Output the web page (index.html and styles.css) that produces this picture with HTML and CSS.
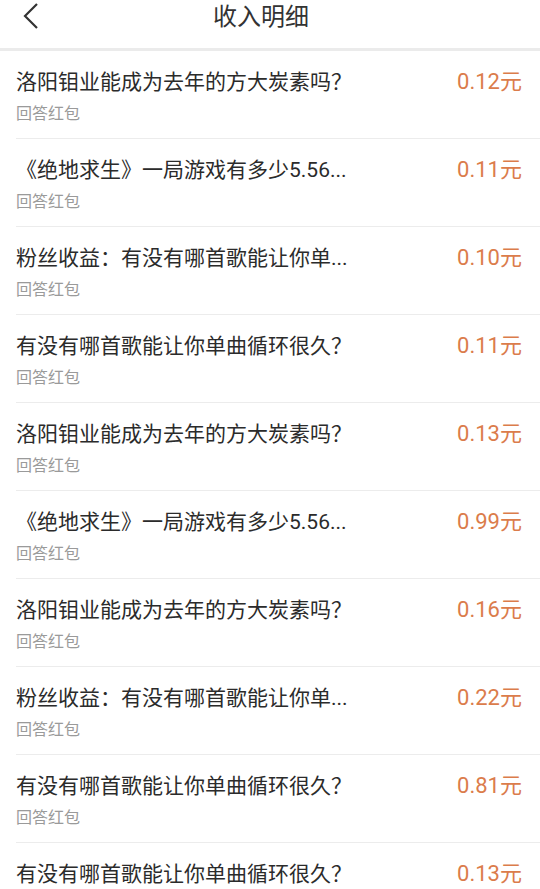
FILE: index.html
```html
<!DOCTYPE html>
<html lang="zh-CN">
<head>
  <meta charset="UTF-8" />
  <meta name="viewport" content="width=device-width, initial-scale=1.0"/>
  <title>收入明细</title>
  <link rel="stylesheet" href="styles.css">
</head>
<body>
  <div class="header">
    <a class="back" href="#">
      <svg width="18" height="28" viewBox="0 0 18 28"><path d="M15 2 L3 14 L15 26" fill="none" stroke="#333" stroke-width="2.2"/></svg>
    </a>
    <h1>收入明细</h1>
  </div>

  <!-- 收入列表 -->
  <ul class="list">
    <li class="item">
      <div class="top"><span class="title">洛阳钼业能成为去年的方大炭素吗？</span><span class="amount">0.12元</span></div>
      <div class="sub">回答红包</div>
    </li>
    <li class="item">
      <div class="top"><span class="title">《绝地求生》一局游戏有多少5.56...</span><span class="amount">0.11元</span></div>
      <div class="sub">回答红包</div>
    </li>
    <li class="item">
      <div class="top"><span class="title">粉丝收益：有没有哪首歌能让你单...</span><span class="amount">0.10元</span></div>
      <div class="sub">回答红包</div>
    </li>
    <li class="item">
      <div class="top"><span class="title">有没有哪首歌能让你单曲循环很久？</span><span class="amount">0.11元</span></div>
      <div class="sub">回答红包</div>
    </li>
    <li class="item">
      <div class="top"><span class="title">洛阳钼业能成为去年的方大炭素吗？</span><span class="amount">0.13元</span></div>
      <div class="sub">回答红包</div>
    </li>
    <li class="item">
      <div class="top"><span class="title">《绝地求生》一局游戏有多少5.56...</span><span class="amount">0.99元</span></div>
      <div class="sub">回答红包</div>
    </li>
    <li class="item">
      <div class="top"><span class="title">洛阳钼业能成为去年的方大炭素吗？</span><span class="amount">0.16元</span></div>
      <div class="sub">回答红包</div>
    </li>
    <li class="item">
      <div class="top"><span class="title">粉丝收益：有没有哪首歌能让你单...</span><span class="amount">0.22元</span></div>
      <div class="sub">回答红包</div>
    </li>
    <li class="item">
      <div class="top"><span class="title">有没有哪首歌能让你单曲循环很久？</span><span class="amount">0.81元</span></div>
      <div class="sub">回答红包</div>
    </li>
    <li class="item">
      <div class="top"><span class="title">有没有哪首歌能让你单曲循环很久？</span><span class="amount">0.13元</span></div>
    </li>
  </ul>
</body>
</html>
```

FILE: styles.css
```css
body {
  margin: 0;
  background: #fff;
  font-family: Roboto, "Noto Sans CJK SC", sans-serif;
  color: #333;
  overflow: hidden;
}

.header {
  height: 48px;
  border-bottom: 3px solid #ebebeb;
  display: flex;
  justify-content: center;
  padding-right: 18px;
  position: relative;
}

.header h1 {
  margin: 0;
  font-size: 24px;
  font-weight: normal;
  line-height: 34px;
  color: #333;
}

.back {
  position: absolute;
  left: 22px;
  top: 2px;
}

.list {
  list-style: none;
  margin: 0;
  padding: 0 0 0 16px;
}

.item {
  height: 87px;
  border-bottom: 1px solid #ececec;
  padding-right: 18px;
}

.top {
  display: flex;
  justify-content: space-between;
  align-items: center;
  padding-top: 17px;
  height: 28px;
}

.title {
  font-size: 21px;
  line-height: 28px;
  color: #2b2b2b;
  white-space: nowrap;
}

.amount {
  font-size: 22px;
  line-height: 28px;
  color: #db7c4b;
}

.sub {
  margin-top: 8px;
  font-size: 16px;
  line-height: 20px;
  color: #9a9a9a;
}
```
